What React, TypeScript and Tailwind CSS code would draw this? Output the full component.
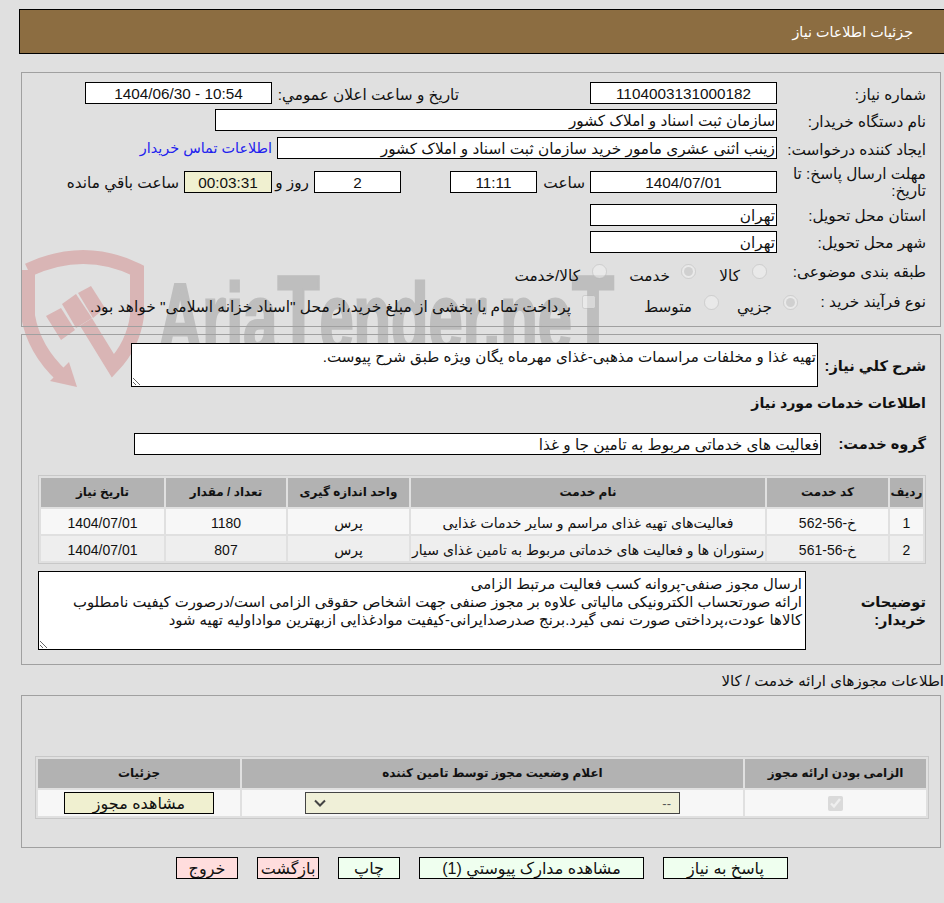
import React from "react";

const font = "[font-family:'Liberation_Sans','DejaVu_Sans',sans-serif]";

function Field({ className, children }: { className: string; children?: React.ReactNode }) {
  return (
    <div className={"h-[22px] border border-black bg-white leading-[21px] whitespace-nowrap overflow-hidden " + className}>
      {children}
    </div>
  );
}

function Label({ children, className = "" }: { children: React.ReactNode; className?: string }) {
  return <div className={"w-[149px] shrink-0 pl-[10px] leading-[17px] " + className}>{children}</div>;
}

function Radio({ checked, label, boxClass, labelClass }: { checked?: boolean; label: string; boxClass: string; labelClass: string }) {
  return (
    <div className="flex items-center">
      <input type="radio" disabled checked={!!checked} readOnly className={"w-[15px] h-[15px] shrink-0 opacity-70 m-0 " + boxClass} />
      <span className={labelClass}>{label}</span>
    </div>
  );
}

function Watermark() {
  return (
    <svg dir="ltr" className="absolute left-0 top-0 pointer-events-none" width="640" height="400" viewBox="0 0 640 400">
      <g fill="none" stroke="#d9b5b5" strokeWidth="14">
        <path d="M28 270 Q84 244 137 270 L137 316 Q133 345 113 366 L86 322" />
        <path d="M28 270 L28 316 Q34 350 62 376" />
      </g>
      <g fill="#d9b5b5">
        <path d="M46 316 L61 308 L75 330 L61 340 Z" />
        <path d="M62 304 L76 294 L92 318 L76 328 Z" />
        <path d="M78 293 L91 286 L105 308 L93 318 Z" />
        <path d="M77 387 L69 362 L50 381 Z" />
      </g>
      <text x="158" y="352" direction="ltr" fontFamily="'Liberation Sans', sans-serif" fontWeight="700" fontSize="98" fill="#bebebe" stroke="#bebebe" strokeWidth="3" textLength="456" lengthAdjust="spacingAndGlyphs">
        Aria<tspan fontSize="110">T</tspan>ender.ne<tspan fontSize="110">T</tspan>
      </text>
    </svg>
  );
}

function ServiceTable() {
  const head = "bg-[#b2b2b2] font-bold h-[29px] text-[12px] text-center";
  const rows = [
    ["1", "خ-56-562", "فعالیت‌های تهیه غذای مراسم و سایر خدمات غذایی", "پرس", "1180", "1404/07/01"],
    ["2", "خ-56-561", "رستوران ها و فعالیت های خدماتی مربوط به تامین غذای سیار", "پرس", "807", "1404/07/01"],
  ];
  return (
    <table className="table-fixed border-separate border-spacing-[2px] border border-[#c8c8c8] w-[888px] mt-[20px] text-[14px]">
      <colgroup>
        <col className="w-[33px]" />
        <col className="w-[121px]" />
        <col className="w-[354px]" />
        <col className="w-[121px]" />
        <col className="w-[120px]" />
        <col className="w-[123px]" />
      </colgroup>
      <thead>
        <tr>
          {["ردیف", "کد خدمت", "نام خدمت", "واحد اندازه گیری", "تعداد / مقدار", "تاریخ نیاز"].map((h) => (
            <th key={h} className={head}>{h}</th>
          ))}
        </tr>
      </thead>
      <tbody>
        {rows.map((r, i) => (
          <tr key={r[0]} className={i === 0 ? "bg-[#f7f7f7]" : "bg-[#eeeeee]"}>
            {r.map((c, j) => (
              <td key={j} className="h-[25px] text-center whitespace-nowrap overflow-hidden p-0 pt-[4px]">{c}</td>
            ))}
          </tr>
        ))}
      </tbody>
    </table>
  );
}

export default function App() {
  return (
    <div dir="rtl" className={"relative w-[944px] h-[903px] overflow-hidden bg-[#e0e0e0] text-[15.3px] leading-[17px] text-[#111] " + font}>
      <Watermark />
      <div className="relative">
        {/* header */}
        <div className="mt-[9px] ml-[19px] h-[45px] bg-[#8c6d41] border-y border-l border-black text-white text-[14.3px] flex items-center pr-[31px] pt-[2px] absolute top-0 left-0 right-0">
          جزئیات اطلاعات نیاز
        </div>

        <div className="pt-[72px]">
          {/* main info */}
          <div className="ml-[21px] mr-[3px] h-[255px] border border-[#a0a0a0] pr-[14px] pt-[9px]">
            <div className="flex items-center">
              <Label className="pt-[2px]">شماره نیاز:</Label>
              <Field className="w-[187px] text-center">1104003131000182</Field>
              <div className="w-[318px] pr-[131px] pt-[2px] whitespace-nowrap">تاریخ و ساعت اعلان عمومي:</div>
              <Field className="w-[187px] text-center"><span dir="ltr">1404/06/30 - 10:54</span></Field>
            </div>
            <div className="flex items-center mt-[5px]">
              <Label className="pt-[2px]">نام دستگاه خریدار:</Label>
              <Field className="w-[562px] pr-[1px]">سازمان ثبت اسناد و املاک کشور</Field>
            </div>
            <div className="flex items-center mt-[6px]">
              <Label className="pt-[2px]">ایجاد کننده درخواست:</Label>
              <Field className="w-[500px] pr-[1px]">زینب اثنی عشری مامور خرید سازمان ثبت اسناد و املاک کشور</Field>
              <a className="text-[#2222ee] text-[14.4px] mr-[5px] whitespace-nowrap">اطلاعات تماس خریدار</a>
            </div>
            <div className="flex items-center mt-[6px]">
              <Label>مهلت ارسال پاسخ: تا تاریخ:</Label>
              <Field className="w-[187px] text-center">1404/07/01</Field>
              <span className="mr-[5px] w-[48px]">ساعت</span>
              <Field className="w-[87px] text-center">11:11</Field>
              <div className="w-[49px]" />
              <Field className="w-[87px] text-center">2</Field>
              <span className="mr-[5px] w-[37px]">روز و</span>
              <Field className="w-[88px] text-center !bg-[#f0f0d0]">00:03:31</Field>
              <span className="mr-[5px] whitespace-nowrap">ساعت باقي مانده</span>
            </div>
            <div className="flex items-center mt-[5px]">
              <Label>استان محل تحویل:</Label>
              <Field className="w-[187px] pr-[1px]">تهران</Field>
            </div>
            <div className="flex items-center mt-[5px]">
              <Label>شهر محل تحویل:</Label>
              <Field className="w-[187px] pr-[1px]">تهران</Field>
            </div>
            <div className="flex items-center mt-[11px] h-[20px]">
              <Label className="pb-[5px]">طبقه بندی موضوعی:</Label>
              <div className="flex items-center pr-[10px]">
                <Radio label="کالا" boxClass="mb-[6px]" labelClass="w-[56px] pr-[12px] pt-[2px]" />
                <Radio checked label="خدمت" boxClass="mb-[6px]" labelClass="w-[74px] pr-[11px] pt-[2px]" />
                <Radio label="کالا/خدمت" boxClass="mb-[6px]" labelClass="pr-[12px] pt-[2px]" />
              </div>
            </div>
            <div className="flex items-center mt-[10px] h-[20px]">
              <Label className="!w-[128px] pb-[6px] whitespace-nowrap !pl-0">نوع فرآیند خرید :</Label>
              <div className="flex items-center">
                <Radio checked label="جزيي" boxClass="mb-[4px]" labelClass="w-[64px] pr-[11px] pt-[4px]" />
                <Radio label="متوسط" boxClass="mb-[4px]" labelClass="w-[108px] pr-[12px] pt-[4px]" />
                <input type="checkbox" disabled className="w-[14px] h-[14px] m-0 mb-[4px] opacity-70" />
                <span className="pr-[11px] pt-[4px] text-[15.45px] whitespace-nowrap">پرداخت تمام یا بخشی از مبلغ خرید،از محل "اسناد خزانه اسلامی" خواهد بود.</span>
              </div>
            </div>
          </div>

          {/* need description */}
          <div className="ml-[21px] mr-[3px] mt-[7px] h-[331px] border border-[#a0a0a0] pr-[14px] pt-[8px]">
            <div className="flex items-center">
              <div className="w-[108px] font-bold text-[14.6px] shrink-0 pt-[3px]">شرح کلي نیاز:</div>
              <div className="w-[687px] h-[44px] border border-black bg-white text-[15.1px] leading-[18px] resize overflow-auto pr-[1px] pt-[4px]">
                تهیه غذا و مخلفات مراسمات مذهبی-غذای مهرماه یگان ویژه طبق شرح پیوست.
              </div>
            </div>
            <div className="font-bold text-[14.2px] mt-[6px] leading-[20px]">اطلاعات خدمات مورد نیاز</div>
            <div className="flex items-center mt-[20px]">
              <div className="w-[105px] font-bold text-[14.6px] shrink-0 pt-[1px]">گروه خدمت:</div>
              <Field className="w-[687px] pr-[1px]">فعالیت های خدماتی مربوط به تامین جا و غذا</Field>
            </div>
            <ServiceTable />
            <div className="flex items-center mt-[7px]">
              <div className="w-[120px] font-bold text-[14.6px] shrink-0 leading-[18px] pl-[40px]">توضیحات خریدار:</div>
              <div className="w-[768px] h-[79px] border border-black bg-white text-[14.85px] leading-[18px] resize overflow-auto pr-[3px] pt-[3px]">
                ارسال مجوز صنفی-پروانه کسب فعالیت مرتبط الزامی
                <br />
                ارائه صورتحساب الکترونیکی مالیاتی علاوه بر مجوز صنفی جهت اشخاص حقوقی الزامی است/درصورت کیفیت نامطلوب
                <br />
                کالاها عودت،پرداختی صورت نمی گیرد.برنج صدرصدایرانی-کیفیت موادغذایی ازبهترین مواداولیه تهیه شود
              </div>
            </div>
          </div>

          <div className="mt-[5px] h-[22px] leading-[22px] text-[15px] whitespace-nowrap">اطلاعات مجوزهای ارائه خدمت / کالا</div>

          {/* permits */}
          <div className="ml-[21px] mr-[3px] mt-[3px] h-[153px] border border-[#a0a0a0] pt-[60px] pl-[13px] pr-[11px] text-[14px]">
            <table className="table-fixed border-separate border-spacing-[2px] border border-[#c8c8c8] w-[894px]">
              <colgroup>
                <col className="w-[181px]" />
                <col className="w-[501px]" />
                <col />
              </colgroup>
              <thead>
                <tr>
                  <th className="bg-[#b2b2b2] h-[29px] text-[12px] font-bold">الزامی بودن ارائه مجوز</th>
                  <th className="bg-[#b2b2b2] h-[29px] text-[12px] font-bold">اعلام وضعیت مجوز توسط تامین کننده</th>
                  <th className="bg-[#b2b2b2] h-[29px] text-[12px] font-bold">جزئیات</th>
                </tr>
              </thead>
              <tbody>
                <tr className="bg-[#f7f7f7]">
                  <td className="h-[26px] p-0 text-center">
                    <input type="checkbox" disabled checked readOnly className="w-[15px] h-[15px] m-0 align-middle opacity-70" />
                  </td>
                  <td className="h-[26px] p-0">
                    <div className="mr-[63px] w-[375px] h-[22px] border border-[#444] bg-[#f0f0d8] flex items-center justify-between px-[8px] text-[#555] text-[13px]">
                      <span>--</span>
                      <svg width="12" height="8" viewBox="0 0 12 8" fill="none" stroke="#444" strokeWidth="2"><path d="M1 1.5 L6 6.5 L11 1.5" /></svg>
                    </div>
                  </td>
                  <td className="h-[26px] p-0">
                    <div className="mr-[26px] w-[150px] h-[22px] border border-black bg-[#f0f0d0] text-center text-[16px] leading-[21px]">مشاهده مجوز</div>
                  </td>
                </tr>
              </tbody>
            </table>
          </div>

          {/* actions */}
          <div className="flex justify-start gap-[19px] mt-[9px] pr-[156px] text-[16px]">
            <div className="w-[125px] h-[22px] border border-black bg-[#efffef] text-center leading-[22px]">پاسخ به نیاز</div>
            <div className="w-[225px] h-[22px] border border-black bg-[#efffef] text-center leading-[22px]">مشاهده مدارک پیوستي (1)</div>
            <div className="w-[62px] h-[22px] border border-black bg-[#efffef] text-center leading-[22px]">چاپ</div>
            <div className="w-[62px] h-[22px] border border-black bg-[#ffdddd] text-center leading-[22px]">بازگشت</div>
            <div className="w-[62px] h-[22px] border border-black bg-[#ffdddd] text-center leading-[22px]">خروج</div>
          </div>
        </div>
      </div>
    </div>
  );
}
